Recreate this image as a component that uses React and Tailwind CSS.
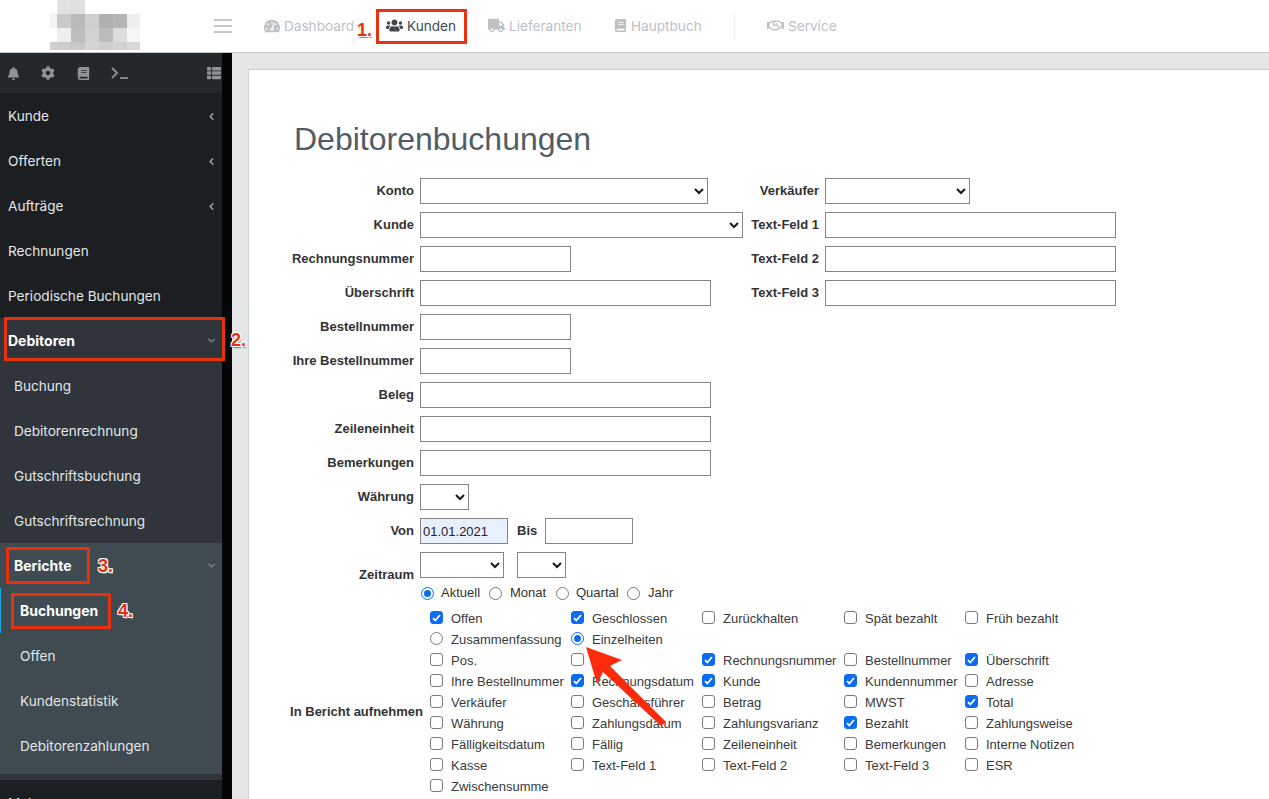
import React from "react";
import { FaTachometerAlt, FaUsers, FaTruck, FaBook, FaRegHandshake, FaBell, FaCog, FaThList } from "react-icons/fa";
import { ChevronLeft, ChevronDown } from "lucide-react";

const logo = [
  "bg-white","bg-[#e2e2e2]","bg-[#e0e0e0]","bg-white","bg-white","bg-white","bg-white",
  "bg-[#f3f3f3]","bg-[#c9c9c9]","bg-[#b9b9b9]","bg-[#cfcfcf]","bg-[#b0b0b0]","bg-[#b4b4b4]","bg-[#eeeeee]",
  "bg-white","bg-[#eeeeee]","bg-[#bdbdbd]","bg-[#d2d2d2]","bg-[#bcbcbc]","bg-[#dcdcdc]","bg-[#f5f5f5]",
  "bg-[#d0d0d0]","bg-[#cccccc]","bg-[#c8c8c8]","bg-[#d4d4d4]","bg-[#cfcfcf]","bg-[#d3d3d3]","bg-[#d8d8d8]",
];

function TopItem({ icon: Icon, label, active, size = 16, className = "" }) {
  return (
    <div className={`flex items-center gap-[4px] text-[13.6px] ${active ? "text-[#3e4850]" : "text-[#bcc1c5]"} ${className}`}>
      <Icon size={size} />
      <span>{label}</span>
    </div>
  );
}

function Header() {
  return (
    <header className="flex h-[53px] shrink-0 items-center border-b border-[#c2c8cc] bg-white font-['Inter',sans-serif]">
      <div className="h-[52px] w-[214px] shrink-0 self-start pl-[50px]">
        <div className="grid h-[50px] w-[90px] grid-cols-[7px_14px_14px_14px_14px_14px_13px] grid-rows-[14px_14px_14px_8px]">
          {logo.map((c, i) => <div key={i} className={c} />)}
        </div>
      </div>
      <div className="flex w-[18px] shrink-0 flex-col gap-[4px]">
        <div className="h-[2px] bg-[#c4c8cb]" />
        <div className="h-[2px] bg-[#c4c8cb]" />
        <div className="h-[2px] bg-[#c4c8cb]" />
      </div>
      <TopItem icon={FaTachometerAlt} label="Dashboard" className="ml-[32px] w-[122px]" />
      <TopItem icon={FaUsers} label="Kunden" active size={17} className="w-[102px]" />
      <TopItem icon={FaTruck} label="Lieferanten" size={17} className="w-[126px]" />
      <TopItem icon={FaBook} label="Hauptbuch" size={13} className="w-[120px]" />
      <div className="h-[26px] w-px bg-[#eceeef]" />
      <TopItem icon={FaRegHandshake} label="Service" size={17} className="ml-[32px]" />
    </header>
  );
}

function NavRow({ label, indent = "pl-[8px]", bold, chevron, className = "" }) {
  return (
    <div className={`flex h-[45px] items-center pr-[5px] ${bold ? "text-[14px] font-bold text-white" : "pt-[1px] text-[13.6px] text-[#e4e7ea]"} ${indent} ${className}`}>
      <span className="flex-1">{label}</span>
      {chevron === "left" && <ChevronLeft size={11} strokeWidth={3} className="text-[#a5abb0]" />}
      {chevron === "down" && <ChevronDown size={11} strokeWidth={3} className="text-[#828a90]" />}
    </div>
  );
}

function Sidebar() {
  return (
    <aside className="flex w-[232px] shrink-0 overflow-hidden bg-[#050505] font-['Inter',sans-serif]">
      <div className="w-[222px] shrink-0 bg-[#1b1f21]">
        <div className="flex h-[40px] items-center bg-[#23282c] pl-[7px] pr-[1px] text-[#8d9499]">
          <FaBell size={13} />
          <FaCog size={14} className="ml-[21px]" />
          <FaBook size={13} className="ml-[22px]" />
          <svg width="18" height="12" viewBox="0 0 18 12" fill="none" stroke="currentColor" strokeWidth="1.8" className="ml-[21px]">
            <path d="M1 1l5 5-5 5" />
            <path d="M9 11h8" />
          </svg>
          <FaThList size={14} className="ml-auto" />
        </div>
        <NavRow label="Kunde" chevron="left" />
        <NavRow label="Offerten" chevron="left" />
        <NavRow label="Aufträge" chevron="left" />
        <NavRow label="Rechnungen" />
        <NavRow label="Periodische Buchungen" />
        <div className="bg-[#2f353a] pb-[6px]">
          <NavRow label="Debitoren" bold chevron="down" />
          <NavRow label="Buchung" indent="pl-[14px]" />
          <NavRow label="Debitorenrechnung" indent="pl-[14px]" />
          <NavRow label="Gutschriftsbuchung" indent="pl-[14px]" />
          <NavRow label="Gutschriftsrechnung" indent="pl-[14px]" />
          <div className="bg-[#3f4a51] pb-[6px]">
            <NavRow label="Berichte" bold chevron="down" indent="pl-[14px]" />
            <NavRow label="Buchungen" bold indent="pl-[19px]" className="border-l border-[#20a8d8]" />
            <NavRow label="Offen" indent="pl-[20px]" />
            <NavRow label="Kundenstatistik" indent="pl-[20px]" />
            <NavRow label="Debitorenzahlungen" indent="pl-[20px]" />
          </div>
        </div>
        <NavRow label="Mahnungen" />
      </div>
    </aside>
  );
}

const ctl = "box-border h-[26px] border border-[#858585] text-[13px] text-[#222]";

function Select({ w }) {
  return (
    <div className={`relative ${w}`}>
      <select className={`${ctl} block w-full appearance-none bg-white`} />
      <svg width="10" height="7" viewBox="0 0 10 7" fill="none" stroke="#1a1a1a" strokeWidth="2" className="pointer-events-none absolute right-[4px] top-[10px]">
        <path d="M1 1l4 4 4-4" />
      </svg>
    </div>
  );
}

function Input({ w, value, bg = "bg-white" }) {
  return <input readOnly value={value || ""} className={`${ctl} ${w} ${bg} px-[2px]`} />;
}

function Row({ label, children, right }) {
  return (
    <div className="mb-[8px] flex h-[26px] items-center">
      <label className="mr-[6px] w-[134px] text-right text-[13px] font-bold text-[#333]">{label}</label>
      <div className="w-[323px]">{children}</div>
      {right && (
        <>
          <label className="mr-[6px] w-[76px] whitespace-nowrap text-right text-[13px] font-bold text-[#333]">{right.label}</label>
          {right.control}
        </>
      )}
    </div>
  );
}

function Check({ on }) {
  return (
    <span className={`mr-[8px] box-border flex h-[13px] w-[13px] shrink-0 -translate-y-[1px] items-center justify-center rounded-[3px] border ${on ? "border-[#0b6bf2] bg-[#0b6bf2]" : "border-[#7a7a7a] bg-white"}`}>
      {on && (
        <svg width="9" height="8" viewBox="0 0 9 8" fill="none" stroke="#fff" strokeWidth="1.8">
          <path d="M1 4.2l2.3 2.3L8 1" />
        </svg>
      )}
    </span>
  );
}

function Radio({ on, className = "mr-[8px] -translate-y-[1px]" }) {
  return (
    <span className={`box-border flex h-[13px] w-[13px] shrink-0 items-center justify-center rounded-full ${on ? "border-[1.5px] border-[#0b6bf2] bg-white" : "border border-[#7a7a7a] bg-white"} ${className}`}>
      {on && <span className="h-[7px] w-[7px] rounded-full bg-[#0b6bf2]" />}
    </span>
  );
}

const cells = [
  ["c", "Offen", 1], ["c", "Geschlossen", 1], ["c", "Zurückhalten", 0], ["c", "Spät bezahlt", 0], ["c", "Früh bezahlt", 0],
  ["r", "Zusammenfassung", 0], ["r", "Einzelheiten", 1], ["e"], ["e"], ["e"],
  ["c", "Pos.", 0], ["c", "", 0], ["c", "Rechnungsnummer", 1], ["c", "Bestellnummer", 0], ["c", "Überschrift", 1],
  ["c", "Ihre Bestellnummer", 0], ["c", "Rechnungsdatum", 1], ["c", "Kunde", 1], ["c", "Kundennummer", 1], ["c", "Adresse", 0],
  ["c", "Verkäufer", 0], ["c", "Geschäftsführer", 0], ["c", "Betrag", 0], ["c", "MWST", 0], ["c", "Total", 1],
  ["c", "Währung", 0], ["c", "Zahlungsdatum", 0], ["c", "Zahlungsvarianz", 0], ["c", "Bezahlt", 1], ["c", "Zahlungsweise", 0],
  ["c", "Fälligkeitsdatum", 0], ["c", "Fällig", 0], ["c", "Zeileneinheit", 0], ["c", "Bemerkungen", 0], ["c", "Interne Notizen", 0],
  ["c", "Kasse", 0], ["c", "Text-Feld 1", 0], ["c", "Text-Feld 2", 0], ["c", "Text-Feld 3", 0], ["c", "ESR", 0],
  ["c", "Zwischensumme", 0],
];

function Main() {
  return (
    <main className="min-w-0 flex-1 bg-[#e4e5e6] pl-[16px] pt-[16px]">
      <div className="h-full border-l border-t border-[#c8ced3] bg-white pl-[31px]">
        <h1 className="mb-[20px] ml-[14px] mt-[50px] font-['Liberation_Sans',sans-serif] text-[32px] leading-[38px] text-[#505d66]">Debitorenbuchungen</h1>
        <div className="font-['Liberation_Sans',sans-serif]">
          <Row label="Konto" right={{ label: "Verkäufer", control: <Select w="w-[145px]" /> }}><Select w="w-[288px]" /></Row>
          <Row label="Kunde" right={{ label: "Text-Feld 1", control: <Input w="w-[291px]" /> }}><Select w="w-[323px]" /></Row>
          <Row label="Rechnungsnummer" right={{ label: "Text-Feld 2", control: <Input w="w-[291px]" /> }}><Input w="w-[151px]" /></Row>
          <Row label="Überschrift" right={{ label: "Text-Feld 3", control: <Input w="w-[291px]" /> }}><Input w="w-[291px]" /></Row>
          <Row label="Bestellnummer"><Input w="w-[151px]" /></Row>
          <Row label="Ihre Bestellnummer"><Input w="w-[151px]" /></Row>
          <Row label="Beleg"><Input w="w-[291px]" /></Row>
          <Row label="Zeileneinheit"><Input w="w-[291px]" /></Row>
          <Row label="Bemerkungen"><Input w="w-[291px]" /></Row>
          <Row label="Währung"><Select w="w-[49px]" /></Row>
          <Row label="Von">
            <div className="flex items-center">
              <Input w="w-[88px]" value="01.01.2021" bg="bg-[#e8f0fe]" />
              <span className="ml-[9px] mr-[9px] w-[19px] text-[13px] font-bold text-[#333]">Bis</span>
              <Input w="w-[88px]" />
            </div>
          </Row>
          <div className="flex h-[26px]">
            <label className="mr-[6px] mt-[13px] w-[134px] text-right text-[13px] font-bold text-[#333]">Zeitraum</label>
            <div className="flex gap-[13px]">
              <Select w="w-[84px]" />
              <Select w="w-[49px]" />
            </div>
          </div>
          <div className="ml-[141px] mt-[7px] flex h-[16px] items-center text-[13px] text-[#333]">
            <Radio on className="mr-[7px]" /><span className="w-[48px]">Aktuell</span>
            <Radio className="mr-[8px]" /><span className="w-[46px]">Monat</span>
            <Radio className="mr-[7px]" /><span className="w-[51px]">Quartal</span>
            <Radio className="mr-[8px]" /><span>Jahr</span>
          </div>
          <div className="flex pt-[7px]">
            <div className="w-[143px] shrink-0 pl-[10px] pt-[91px] text-right">
              <span className="whitespace-nowrap text-[13px] font-bold text-[#333]">In Bericht aufnehmen</span>
            </div>
            <div className="ml-[7px] grid grid-cols-[141px_131px_142px_121px_120px] auto-rows-[21px] text-[13px] text-[#3a3a3a]">
              {cells.map((c, i) => (
                <div key={i} className="flex items-center whitespace-nowrap">
                  {c[0] === "c" && <Check on={!!c[2]} />}
                  {c[0] === "r" && <Radio on={!!c[2]} />}
                  <span>{c[1]}</span>
                </div>
              ))}
            </div>
          </div>
        </div>
      </div>
    </main>
  );
}

function Box({ className }) {
  return <div className={`pointer-events-none absolute border-[3px] border-[#e8320f] ${className}`} />;
}

function Num({ children, className }) {
  return (
    <div className={`absolute font-['Liberation_Sans',sans-serif] text-[18px] font-bold leading-[20px] text-[#e8320f] [text-shadow:1px_1px_0_#fff,-1px_-1px_0_#fff,1px_-1px_0_#fff,-1px_1px_0_#fff,1px_2px_1px_#888] ${className}`}>
      {children}
    </div>
  );
}

export default function App() {
  return (
    <div className="relative flex h-[799px] w-[1269px] flex-col overflow-hidden bg-white">
      <Header />
      <div className="flex min-h-0 flex-1">
        <Sidebar />
        <Main />
      </div>
      <Box className="left-[376px] top-[9px] h-[35px] w-[91px]" />
      <Box className="left-[4px] top-[317px] h-[44px] w-[221px]" />
      <Box className="left-[6px] top-[547px] h-[37px] w-[84px]" />
      <Box className="left-[11px] top-[593px] h-[36px] w-[100px]" />
      <Num className="left-[357px] top-[20px]">1.</Num>
      <Num className="left-[231px] top-[330px]">2.</Num>
      <Num className="left-[98px] top-[556px]">3.</Num>
      <Num className="left-[118px] top-[601px]">4.</Num>
      <svg className="pointer-events-none absolute left-[580px] top-[640px]" width="95" height="95" viewBox="580 640 95 95">
        <polygon fill="#fb2b0b" points="586,647 622,660 610,666 666,722 661,726 603,672 597,684" />
      </svg>
    </div>
  );
}
